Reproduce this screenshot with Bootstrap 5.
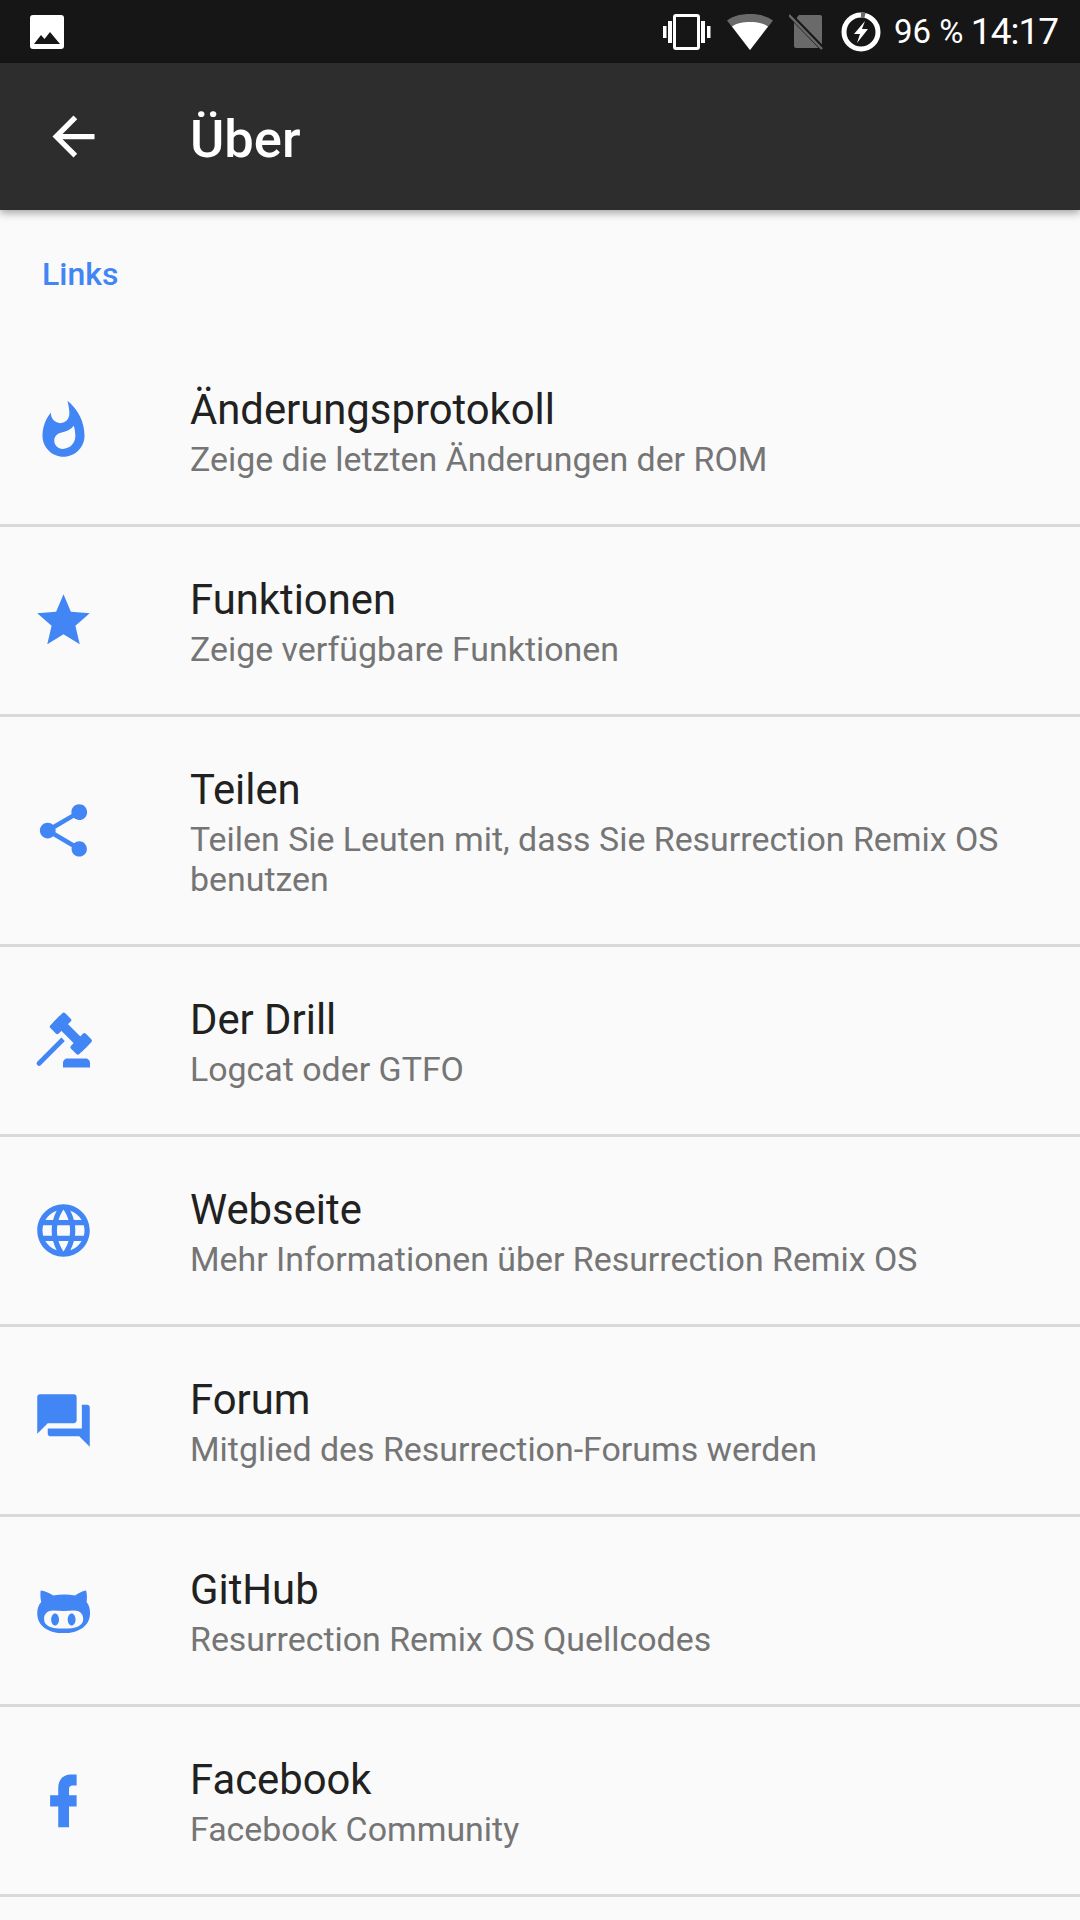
<!DOCTYPE html>
<html lang="de">
<head>
  <meta charset="UTF-8">
  <meta name="viewport" content="width=device-width, initial-scale=1.0">
  <title>Über</title>
  <link href="https://cdn.jsdelivr.net/npm/bootstrap@5.3.2/dist/css/bootstrap.min.css" rel="stylesheet">
  <style>
    body {
      background-color: #fafafa;
      font-family: Roboto, "Liberation Sans", sans-serif;
      width: 1080px;
      height: 1920px;
      overflow: hidden;
    }
    .status-strip {
      background-color: #161616;
      height: 63px;
      color: #fff;
      padding: 0 22px 0 30px;
    }
    .status-strip svg { display: block; }
    .status-pct { font-size: 33px; margin-left: 13px; }
    .status-time { font-size: 37px; margin-left: 7.5px; letter-spacing: -1px; }
    .app-toolbar {
      background-color: #2d2d2d;
      height: 147px;
      box-shadow: 0 3px 8px rgba(0, 0, 0, .35);
      color: #fff;
      position: relative;
    }
    .back-slot { width: 190px; padding-left: 42px; }
    .app-title { font-size: 52.5px; font-weight: 500; padding-top: 5px; }
    .section-title {
      color: #4285f4;
      font-size: 32px;
      font-weight: 500;
      height: 127px;
      padding: 43px 0 0 42px;
      line-height: 42px;
    }
    .list-group-flush .pref-row {
      background: transparent;
      border: 0;
      border-bottom: 3px solid #d9d9d9;
      border-radius: 0;
      padding: 0 32px;
      min-height: 190px;
    }
    .list-group-flush > .pref-row:last-child { border-bottom-width: 3px; }
    .list-group-flush .pref-row.tall { min-height: 230px; }
    .pref-icon { width: 158px; flex: none; }
    .pref-icon svg { display: block; fill: #4285f4; }
    .pref-name { color: #212121; font-size: 41.8px; line-height: 50px; margin-top: 8px; }
    .pref-sub { color: #757575; font-size: 33.9px; line-height: 40px; padding: 5px 0; }
  </style>
</head>
<body>
  <!-- Statusleiste -->
  <div class="status-strip d-flex align-items-center">
    <svg width="34" height="34" viewBox="0 0 34 34"><rect width="34" height="34" rx="3" fill="#fff"/><path d="M4 29l7-9 3.500 4L20 17l10 12z" fill="#161616"/></svg>
    <div class="ms-auto d-flex align-items-center">
      <svg width="48" height="36" viewBox="0 0 48 36" fill="#fff"><path d="M13 1.500h21a1.500 1.500 0 0 1 1.500 1.500v30a1.500 1.500 0 0 1-1.500 1.500H13a1.500 1.500 0 0 1-1.500-1.500V3A1.500 1.500 0 0 1 13 1.500z" fill="none" stroke="#fff" stroke-width="3"/><rect x="5" y="7" width="4" height="22"/><rect x="0" y="12" width="3.500" height="12"/><rect x="38" y="7" width="4" height="22"/><rect x="44" y="12" width="3.500" height="12"/></svg>
      <svg class="ms-3" width="46" height="36" viewBox="0 0 46 36"><path d="M0 6.500C6 2 14 0 23 0s17 2 23 6.500L23 36z" fill="#6a6a6a"/><path d="M5 12.500C10 9 16 8 23 8s13 1 18 4.500L23 36z" fill="#fff"/></svg>
      <svg class="ms-3" width="36" height="38" viewBox="0 0 36 38"><path d="M10 2h21a2 2 0 0 1 2 2v29a2 2 0 0 1-2 2H7a2 2 0 0 1-2-2V8z" fill="#6a6a6a"/><path d="M1 2l33 34" stroke="#161616" stroke-width="5"/><path d="M0 2l33 34" stroke="#6a6a6a" stroke-width="2.500"/></svg>
      <svg class="ms-3" width="40" height="40" viewBox="0 0 40 40"><circle cx="20" cy="20" r="17" fill="none" stroke="#fff" stroke-width="5"/><path d="M20 3a17 17 0 0 1 4 .5" fill="none" stroke="#6a6a6a" stroke-width="5"/><path d="M24 9l-11 13h6l-3 9 11-14h-6z" fill="#fff"/></svg>
      <span class="status-pct">96 %</span>
      <span class="status-time">14:17</span>
    </div>
  </div>

  <!-- Toolbar -->
  <div class="app-toolbar d-flex align-items-center">
    <div class="back-slot">
      <svg width="63" height="63" viewBox="0 0 24 24" class="d-block"><path d="M20 11H7.830l5.590-5.590L12 4l-8 8 8 8 1.410-1.410L7.830 13H20z" fill="#fff"/></svg>
    </div>
    <div class="app-title">Über</div>
  </div>

  <div class="section-title">Links</div>

  <!-- Einträge -->
  <div class="list-group list-group-flush">
    <div class="list-group-item pref-row d-flex align-items-center">
      <div class="pref-icon"><svg width="63" height="63" viewBox="0 0 24 24"><path d="M13.500.67s.74 2.650.74 4.800c0 2.060-1.350 3.730-3.410 3.730-2.070 0-3.630-1.670-3.630-3.730l.03-.36C5.210 7.510 4 10.620 4 14c0 4.420 3.580 8 8 8s8-3.580 8-8C20 8.610 17.410 3.800 13.500.67zM11.710 19c-1.780 0-3.220-1.400-3.220-3.140 0-1.620 1.050-2.760 2.810-3.120 1.770-.36 3.600-1.210 4.620-2.580.39 1.290.59 2.650.59 4.040 0 2.650-2.150 4.800-4.800 4.800z"/></svg></div>
      <div><div class="pref-name">Änderungsprotokoll</div><div class="pref-sub">Zeige die letzten Änderungen der ROM</div></div>
    </div>
    <div class="list-group-item pref-row d-flex align-items-center">
      <div class="pref-icon"><svg width="63" height="63" viewBox="0 0 24 24"><path d="M12 17.270L18.180 21l-1.640-7.030L22 9.240l-7.190-.61L12 2 9.190 8.630 2 9.240l5.460 4.730L5.820 21z"/></svg></div>
      <div><div class="pref-name">Funktionen</div><div class="pref-sub">Zeige verfügbare Funktionen</div></div>
    </div>
    <div class="list-group-item pref-row tall d-flex align-items-center">
      <div class="pref-icon"><svg width="63" height="63" viewBox="0 0 24 24"><path d="M18 16.080c-.76 0-1.440.3-1.960.77L8.910 12.700c.05-.23.09-.46.09-.7s-.04-.47-.09-.7l7.050-4.110c.54.5 1.250.81 2.040.81 1.660 0 3-1.340 3-3s-1.340-3-3-3-3 1.340-3 3c0 .24.04.47.09.7L8.040 9.810C7.500 9.310 6.790 9 6 9c-1.660 0-3 1.340-3 3s1.340 3 3 3c.79 0 1.500-.31 2.040-.81l7.120 4.160c-.05.21-.08.43-.08.65 0 1.610 1.310 2.920 2.920 2.920 1.610 0 2.920-1.310 2.920-2.920s-1.310-2.920-2.920-2.920z"/></svg></div>
      <div><div class="pref-name">Teilen</div><div class="pref-sub">Teilen Sie Leuten mit, dass Sie Resurrection Remix OS benutzen</div></div>
    </div>
    <div class="list-group-item pref-row d-flex align-items-center">
      <div class="pref-icon"><svg width="63" height="63" viewBox="0 0 24 24"><path d="M11.800 22.300v-1.500c0-1 .6-1.900 1.600-1.900h7.100c1 0 1.600.9 1.600 1.900v1.500z"/><g transform="rotate(45 14.800 9.400)"><rect x="7" y="7.600" width="15.600" height="3.600"/><rect x="7" y="5.400" width="4.500" height="8" rx=".8"/><rect x="18.100" y="5.400" width="4.500" height="8" rx=".8"/></g><path d="M2 20.100l9.200-9.200 1.300 1.300-9.200 9.200a.92.92 0 0 1-1.300-1.300z"/></svg></div>
      <div><div class="pref-name">Der Drill</div><div class="pref-sub">Logcat oder GTFO</div></div>
    </div>
    <div class="list-group-item pref-row d-flex align-items-center">
      <div class="pref-icon"><svg width="63" height="63" viewBox="0 0 24 24"><path d="M11.990 2C6.470 2 2 6.480 2 12s4.470 10 9.990 10C17.520 22 22 17.520 22 12S17.520 2 11.990 2zm6.930 6h-2.950c-.32-1.250-.78-2.450-1.380-3.560 1.840.63 3.370 1.910 4.330 3.560zM12 4.040c.83 1.200 1.480 2.530 1.910 3.960h-3.820c.43-1.430 1.080-2.760 1.910-3.960zM4.260 14C4.100 13.360 4 12.690 4 12s.1-1.360.26-2h3.380c-.08.66-.14 1.320-.14 2 0 .68.06 1.340.14 2H4.260zm.82 2h2.950c.32 1.250.78 2.450 1.380 3.560-1.840-.63-3.370-1.900-4.330-3.560zm2.950-8H5.080c.96-1.660 2.490-2.930 4.330-3.560C8.810 5.550 8.350 6.750 8.030 8zM12 19.960c-.83-1.200-1.480-2.530-1.910-3.960h3.820c-.43 1.430-1.080 2.760-1.910 3.960zM14.340 14H9.660c-.09-.66-.16-1.320-.16-2 0-.68.07-1.350.16-2h4.680c.09.65.16 1.320.16 2 0 .68-.07 1.340-.16 2zm.25 5.560c.6-1.110 1.060-2.310 1.380-3.560h2.950c-.96 1.650-2.490 2.930-4.330 3.560zM16.360 14c.08-.66.14-1.320.14-2 0-.68-.06-1.340-.14-2h3.380c.16.64.26 1.310.26 2s-.1 1.360-.26 2h-3.380z"/></svg></div>
      <div><div class="pref-name">Webseite</div><div class="pref-sub">Mehr Informationen über Resurrection Remix OS</div></div>
    </div>
    <div class="list-group-item pref-row d-flex align-items-center">
      <div class="pref-icon"><svg width="63" height="63" viewBox="0 0 24 24"><path d="M21 6h-2v9H6v2c0 .55.45 1 1 1h11l4 4V7c0-.55-.45-1-1-1zm-4 6V3c0-.55-.45-1-1-1H3c-.55 0-1 .45-1 1v14l4-4h10c.55 0 1-.45 1-1z"/></svg></div>
      <div><div class="pref-name">Forum</div><div class="pref-sub">Mitglied des Resurrection-Forums werden</div></div>
    </div>
    <div class="list-group-item pref-row d-flex align-items-center">
      <div class="pref-icon"><svg width="63" height="63" viewBox="0 0 24 24"><path fill-rule="evenodd" d="M3.300 4.400C4.800 4.500 6.700 5.400 8.100 6.300c2.600-.5 5.700-.5 8.300 0 1.400-.9 2.900-1.800 4.200-1.900.4 1.300.4 2.800.2 4.400 1 1.200 1.300 2.700 1.300 4.200 0 5-4.500 7.600-10.100 7.600S2 18 2 13c0-1.500.4-3 1.500-4.200-.3-1.500-.4-3-.2-4.400zM8 12c-2 0-3.400 1.200-3.400 3.200 0 2.600 2.600 3.700 7.400 3.700s7.500-1.100 7.500-3.700c0-2-1.400-3.200-3.400-3.200-1.300 0-2.700.2-4.100.2S9.300 12 8 12zm.8 1.100c.8 0 1.500 1 1.500 2.300s-.7 2.300-1.500 2.300-1.500-1-1.500-2.300.7-2.300 1.500-2.300zm6.300 0c.8 0 1.500 1 1.500 2.300s-.7 2.300-1.500 2.300-1.500-1-1.500-2.300.7-2.300 1.500-2.300z"/></svg></div>
      <div><div class="pref-name">GitHub</div><div class="pref-sub">Resurrection Remix OS Quellcodes</div></div>
    </div>
    <div class="list-group-item pref-row d-flex align-items-center">
      <div class="pref-icon"><svg width="63" height="63" viewBox="0 0 24 24"><path d="M14.100 22.200H10v-7.900H6.900V10H10V7.200c0-3.300 2-5.100 4.800-5.100H17v4.200h-1.500c-1 0-1.400.5-1.400 1.300V10H17v4.300h-2.900z"/></svg></div>
      <div><div class="pref-name">Facebook</div><div class="pref-sub">Facebook Community</div></div>
    </div>
  </div>

  <script src="https://cdn.jsdelivr.net/npm/bootstrap@5.3.2/dist/js/bootstrap.bundle.min.js"></script>
</body>
</html>
